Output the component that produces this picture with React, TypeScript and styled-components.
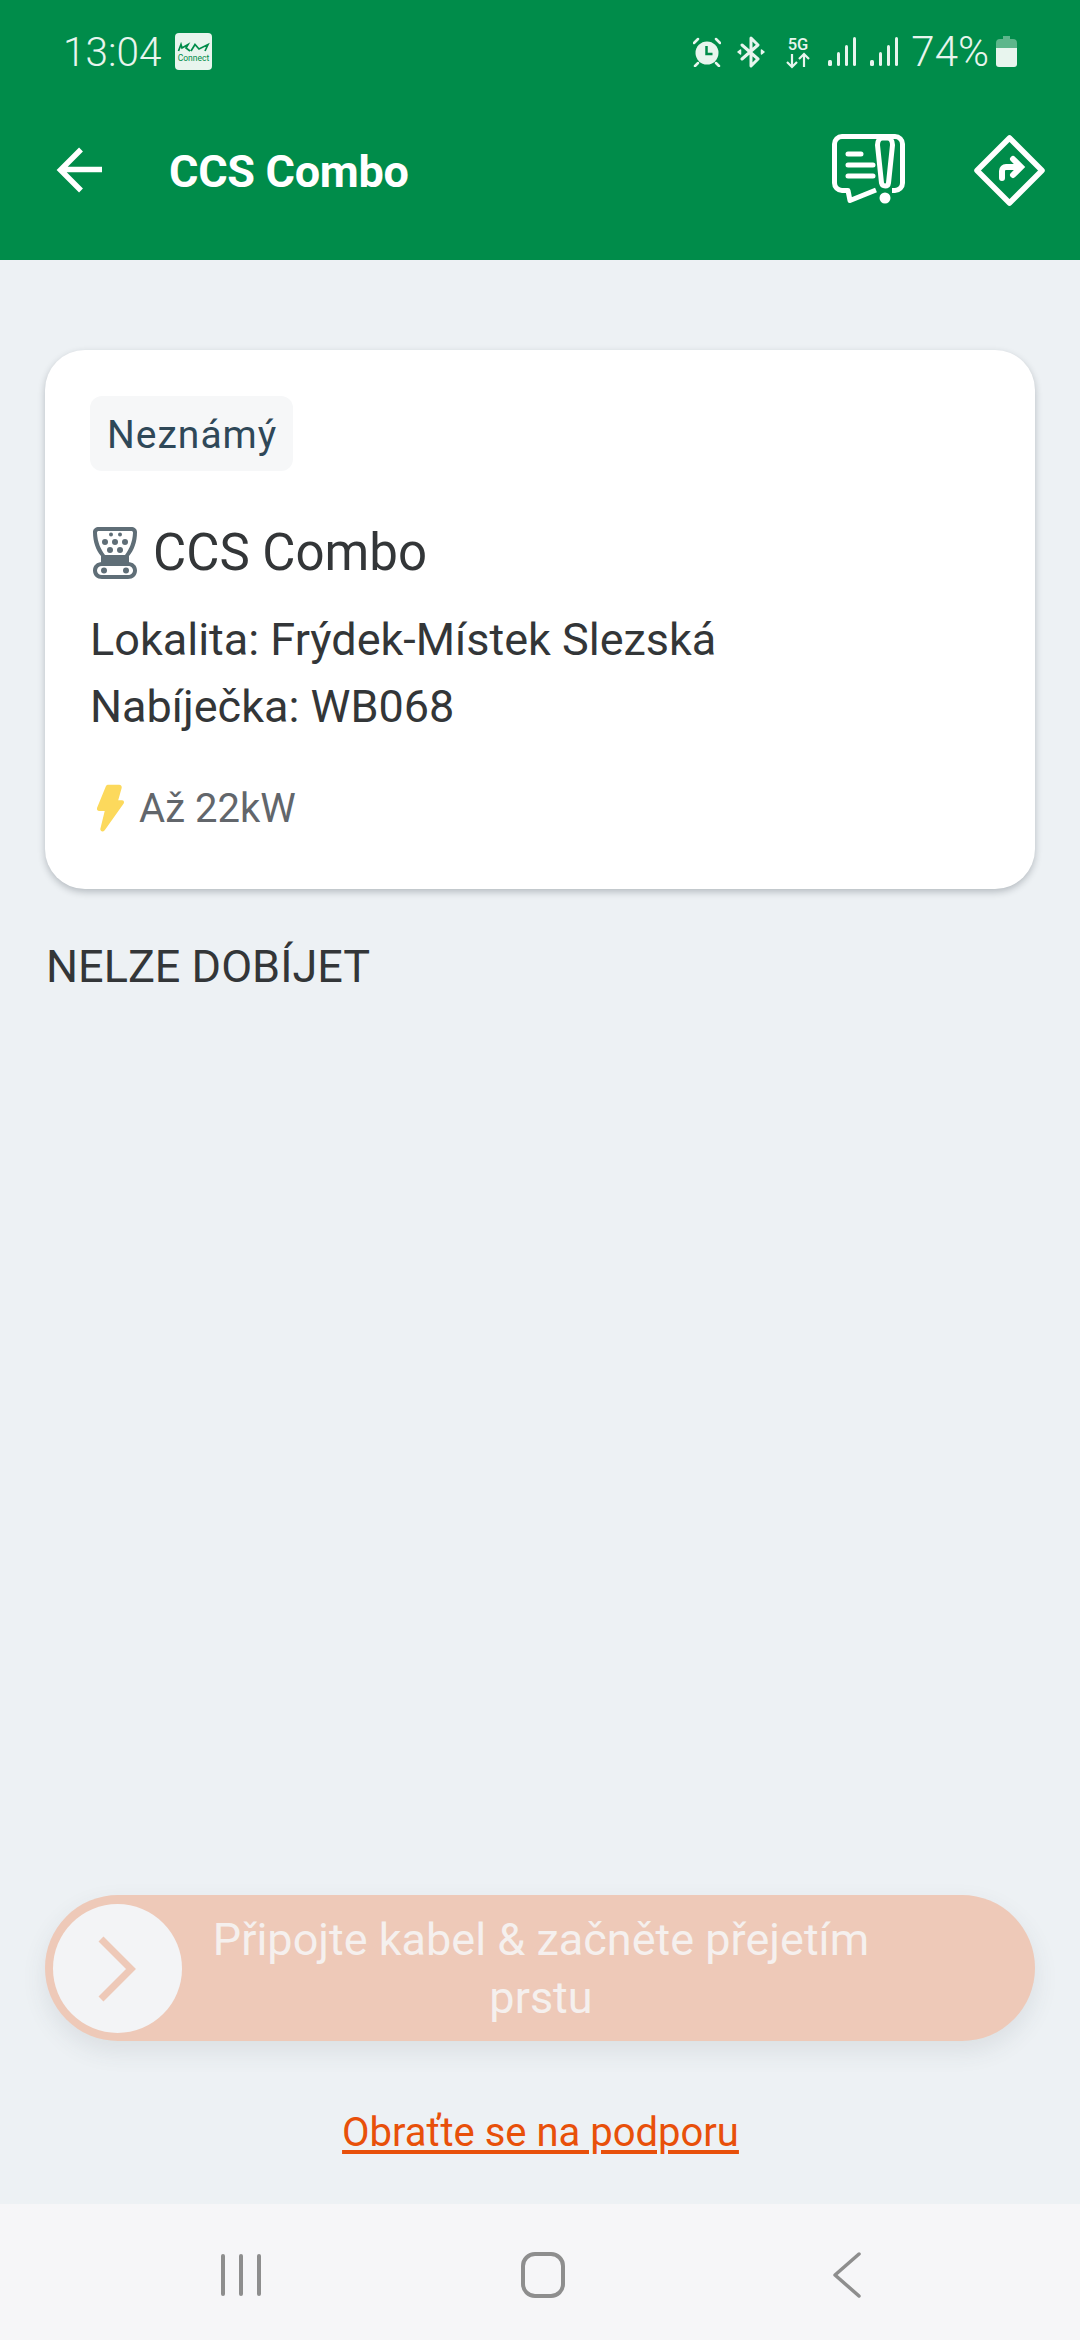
import React from 'react';
import styled, { createGlobalStyle } from 'styled-components';

const GlobalStyle = createGlobalStyle`
  html, body { margin: 0; padding: 0; background: #edf1f4; }
  * { box-sizing: border-box; }
`;

const Screen = styled.div`
  width: 1080px;
  height: 2340px;
  display: flex;
  flex-direction: column;
  background: #edf1f4;
  font-family: Roboto, "Noto Sans", sans-serif;
  color: #333638;
`;

const Header = styled.header`
  height: 260px;
  flex: none;
  background: #008c4a;
  display: flex;
  flex-direction: column;
`;

const StatusBar = styled.div`
  height: 100px;
  padding: 3px 63px 0 63px;
  display: flex;
  align-items: center;
  justify-content: space-between;
  color: #e8f5ee;
`;

const StatusGroup = styled.div`
  display: flex;
  align-items: center;
`;

const StatusIcon = styled.span<{ $gap?: number }>`
  display: flex;
  margin-left: ${(p) => p.$gap ?? 0}px;
`;

const Clock = styled.span`
  font-size: 40.5px;
  font-weight: 300;
  margin-right: 14px;
`;

const Battery = styled.span`
  font-size: 42px;
  font-weight: 300;
  margin: 0 7px 0 13px;
`;

const Toolbar = styled.div`
  flex: 1;
  padding: 0 34px 20px 56px;
  display: flex;
  align-items: center;
`;

const Title = styled.h1`
  margin: 2px 0 0 67px;
  flex: 1;
  font-size: 45px;
  font-weight: 700;
  letter-spacing: -0.3px;
  color: #fff;
`;

const ToolbarActions = styled.div`
  display: flex;
  align-items: center;
  gap: 68px;
`;

const Content = styled.main`
  flex: 1;
  padding: 90px 45px 0;
  display: flex;
  flex-direction: column;
`;

const Card = styled.section`
  height: 539px;
  padding: 46px 45px 0;
  background: #fff;
  border-radius: 40px;
  box-shadow: 0 3px 7px rgba(40, 50, 60, 0.28);
`;

const Tag = styled.span`
  display: inline-block;
  height: 75px;
  padding: 0 16px 0 17px;
  line-height: 78px;
  background: #f6f7f8;
  border-radius: 12px;
  font-size: 39px;
  letter-spacing: 1px;
  color: #2f4858;
`;

const ConnectorRow = styled.div`
  margin: 52px 0 0 3px;
  display: flex;
  align-items: center;
  gap: 16px;
  font-size: 51px;
  line-height: 60px;
`;

const InfoBlock = styled.div`
  margin-top: 23px;
`;

const InfoLine = styled.p`
  margin: 0;
  font-size: 45px;
  line-height: 67px;
`;

const PowerRow = styled.div`
  margin: 43px 0 0 7px;
  display: flex;
  align-items: center;
  gap: 15px;
  font-size: 40px;
  color: #62666b;
`;

const Notice = styled.p`
  margin: 52px 0 0 1px;
  font-size: 45px;
  line-height: 52px;
`;

const Spacer = styled.div`
  flex: 1;
`;

const Slider = styled.div`
  position: relative;
  height: 146px;
  border-radius: 73px;
  background: #eec9b8;
  box-shadow: 0 10px 24px rgba(60, 70, 80, 0.1);
  display: flex;
  align-items: center;
  justify-content: center;
  padding: 2px 148px 0 150px;
`;

const Knob = styled.div`
  position: absolute;
  left: 8px;
  top: 9px;
  width: 129px;
  height: 129px;
  border-radius: 50%;
  background: #f3f4f6;
  display: flex;
  align-items: center;
  justify-content: center;
`;

const SliderLabel = styled.span`
  font-size: 45px;
  line-height: 58px;
  text-align: center;
  color: #f5f0ee;
`;

const SupportLink = styled.a`
  margin: 69px 0 48px;
  align-self: center;
  padding-left: 1px;
  font-size: 40px;
  line-height: 46px;
  color: #e8500a;
  text-decoration: underline;
  text-underline-offset: 4px;
`;

const NavBar = styled.nav`
  height: 136px;
  flex: none;
  background: #f6f6f8;
  display: flex;
  align-items: center;
  padding: 6px 0 0 221px;
`;

const NavSlot = styled.div<{ $width: number }>`
  width: ${(p) => p.$width}px;
  flex: none;
  display: flex;
`;

const KiaIcon = () => (
  <svg width="37" height="37" viewBox="0 0 37 37">
    <rect width="37" height="37" rx="4" fill="#e8f5ee" />
    <path d="M3.500 18L6 11.500 7 15l6-3.500L11 15l4 3M16 18l4-6.500 4 4.500 9-4.500-3 6.500" fill="none" stroke="#008c4a" strokeWidth="1.700" />
    <text x="18.500" y="28" textAnchor="middle" fontSize="8.500" fontFamily="Roboto" fill="#008c4a">Connect</text>
  </svg>
);

const AlarmIcon = () => (
  <svg width="28" height="30" viewBox="0 0 28 30" fill="none">
    <circle cx="14" cy="16" r="11.500" fill="#e8f5ee" />
    <path d="M13.500 9v8h6" stroke="#008c4a" strokeWidth="2.500" />
    <path d="M1 6l4-4M27 6l-4-4M5 26l-3 3M23 26l3 3" stroke="#e8f5ee" strokeWidth="2.500" strokeLinecap="round" />
  </svg>
);

const BluetoothIcon = () => (
  <svg width="28" height="32" viewBox="0 0 28 32" fill="none" stroke="#e8f5ee" strokeWidth="3" strokeLinejoin="round" strokeLinecap="round">
    <path d="M5 9l16 14-7 7V2l7 7L5 23" />
    <path d="M1 16l2.500-2v4zM27 16l-2.500-2v4z" strokeWidth="1.500" fill="#e8f5ee" />
  </svg>
);

const FiveGIcon = () => (
  <svg width="26" height="34" viewBox="0 0 26 34">
    <text x="13" y="15" textAnchor="middle" fontSize="16.500" fontWeight="500" fontFamily="Roboto" fill="#e8f5ee">5G</text>
    <path d="M7 19v13M2 27l5 5 5-5M19 32V19M14 24l5-5 5 5" fill="none" stroke="#e8f5ee" strokeWidth="2.200" />
  </svg>
);

const SignalIcon = () => (
  <svg width="28" height="30" viewBox="0 0 28 30" fill="#e8f5ee">
    <rect x="0" y="23" width="4" height="6" rx="1.500" />
    <rect x="9" y="15" width="3" height="14" rx="1.500" />
    <rect x="17" y="8" width="3" height="21" rx="1.500" />
    <rect x="25" y="0" width="3" height="29" rx="1.500" />
  </svg>
);

const BatteryIcon = () => (
  <svg width="21" height="31" viewBox="0 0 21 31">
    <path d="M7 0h7v3h3a4 4 0 0 1 4 4v5H0V7a4 4 0 0 1 4-4h3z" fill="#e8f5ee" opacity="0.4" />
    <path d="M0 12h21v16a3 3 0 0 1-3 3H3a3 3 0 0 1-3-3z" fill="#e8f5ee" />
  </svg>
);

const BackIcon = () => (
  <svg width="46" height="46" viewBox="0 0 46 46" fill="none" stroke="#fff" strokeWidth="5.500">
    <path d="M46 22.500H5M25 2.500L4.500 23 25 43.500" />
  </svg>
);

const FeedbackIcon = () => (
  <svg width="73" height="72" viewBox="0 0 73 72" fill="none">
    <path d="M44 56L18 66.500 16 56.500H10a7.500 7.500 0 0 1-7.500-7.500V10A7.500 7.500 0 0 1 10 2.500h53a7.500 7.500 0 0 1 7.500 7.500v39a7.500 7.500 0 0 1-7.500 7.500h-3" stroke="#fff" strokeWidth="5" strokeLinejoin="round" />
    <path d="M16 20h13M16 31h25M16 42h25" stroke="#fff" strokeWidth="5" strokeLinecap="round" />
    <path d="M45.500 11c0-4 2-7 5-7h5c3 0 5 3 5 7l-4 38c-.5 4-6 4-7 0z" fill="#008c4a" stroke="#fff" strokeWidth="5" strokeLinejoin="round" />
    <circle cx="53" cy="64" r="5.500" fill="#fff" />
  </svg>
);

const DirectionsIcon = () => (
  <svg width="73" height="73" viewBox="0 0 73 73" fill="none">
    <path d="M36.500 4L69 36.500 36.500 69 4 36.500z" stroke="#fff" strokeWidth="5.500" strokeLinejoin="round" />
    <path d="M29 44v-7a4 4 0 0 1 4-4h14M40 25l8 8-8 8" stroke="#fff" strokeWidth="6" strokeLinecap="round" />
  </svg>
);

const ConnectorIcon = () => (
  <svg width="44" height="52" viewBox="0 0 44 52" fill="#5f6e77">
    <path fillRule="evenodd" d="M6 0h32c3.500 0 6 2 6 5 0 10-3 18-8 24v7H8v-7C3 23 0 15 0 5c0-3 2.500-5 6-5zm0 4C4.500 4 4 4.500 4 6c.5 9 3.500 16 8 22h20c4.500-6 7.500-13 8-22 0-1.500-.5-2-2-2z" />
    <path fillRule="evenodd" d="M9 35h26c5 0 9 3.500 9 8.500S40 52 35 52H9c-5 0-9-3.500-9-8.500S4 35 9 35zm0 4c-3 0-5 2-5 4.500S6 48 9 48h26c3 0 5-2 5-4.500S38 39 35 39z" />
    <circle cx="11" cy="43.500" r="3" />
    <circle cx="33" cy="43.500" r="3" />
    <circle cx="18" cy="7.500" r="2" />
    <circle cx="27" cy="7.500" r="2" />
    <circle cx="12" cy="15" r="3" />
    <circle cx="22" cy="15" r="3" />
    <circle cx="32" cy="15" r="3" />
    <circle cx="17" cy="23" r="3" />
    <circle cx="27" cy="23" r="3" />
  </svg>
);

const BoltIcon = () => (
  <svg width="27" height="50" viewBox="0 0 28 50" fill="#fcd95c">
    <path d="M12 1h11c2 0 3 1.500 2.500 3.500L22 17h4c2 0 2.500 2 1.500 3.500L8 48c-2 2.500-5 1-4.500-1.500L8 28H2c-1.500 0-2.500-1.500-2-3L9 3c.5-1.500 1.500-2 3-2z" />
  </svg>
);

const ChevronIcon = () => (
  <svg width="40" height="66" viewBox="0 0 40 66" fill="none" stroke="#eec9b8" strokeWidth="7">
    <path d="M3 3l30 30L3 63" />
  </svg>
);

const RecentIcon = () => (
  <svg width="42" height="44" viewBox="0 0 42 44" fill="#8e8e8e">
    <rect x="0" y="1" width="4" height="42" rx="2" />
    <rect x="18" y="1" width="4" height="42" rx="2" />
    <rect x="36" y="1" width="4" height="42" rx="2" />
  </svg>
);

const HomeIcon = () => (
  <svg width="44" height="46" viewBox="0 0 44 46" fill="none" stroke="#8e8e8e" strokeWidth="4">
    <rect x="2" y="2" width="40" height="42" rx="12" />
  </svg>
);

const BackNavIcon = () => (
  <svg width="30" height="48" viewBox="0 0 30 48" fill="none" stroke="#8e8e8e" strokeWidth="3.500" strokeLinecap="round" strokeLinejoin="round">
    <path d="M27 3L3 24l24 21" />
  </svg>
);

export default function App() {
  return (
    <Screen>
      <GlobalStyle />
      <Header>
        <StatusBar>
          <StatusGroup>
            <Clock>13:04</Clock>
            <KiaIcon />
          </StatusGroup>
          <StatusGroup>
            <StatusIcon><AlarmIcon /></StatusIcon>
            <StatusIcon $gap={16}><BluetoothIcon /></StatusIcon>
            <StatusIcon $gap={20}><FiveGIcon /></StatusIcon>
            <StatusIcon $gap={17}><SignalIcon /></StatusIcon>
            <StatusIcon $gap={14}><SignalIcon /></StatusIcon>
            <Battery>74%</Battery>
            <BatteryIcon />
          </StatusGroup>
        </StatusBar>
        <Toolbar>
          <BackIcon />
          <Title>CCS Combo</Title>
          <ToolbarActions>
            <FeedbackIcon />
            <DirectionsIcon />
          </ToolbarActions>
        </Toolbar>
      </Header>
      <Content>
        <Card>
          <Tag>Neznámý</Tag>
          <ConnectorRow>
            <ConnectorIcon />
            CCS Combo
          </ConnectorRow>
          <InfoBlock>
            <InfoLine>Lokalita: Frýdek-Místek Slezská</InfoLine>
            <InfoLine>Nabíječka: WB068</InfoLine>
          </InfoBlock>
          <PowerRow>
            <BoltIcon />
            Až 22kW
          </PowerRow>
        </Card>
        <Notice>NELZE DOBÍJET</Notice>
        <Spacer />
        <Slider>
          <Knob>
            <ChevronIcon />
          </Knob>
          <SliderLabel>Připojte kabel &amp; začněte přejetím prstu</SliderLabel>
        </Slider>
        <SupportLink href="#">Obraťte se na podporu</SupportLink>
      </Content>
      <NavBar>
        <NavSlot $width={300}><RecentIcon /></NavSlot>
        <NavSlot $width={311}><HomeIcon /></NavSlot>
        <NavSlot $width={30}><BackNavIcon /></NavSlot>
      </NavBar>
    </Screen>
  );
}
